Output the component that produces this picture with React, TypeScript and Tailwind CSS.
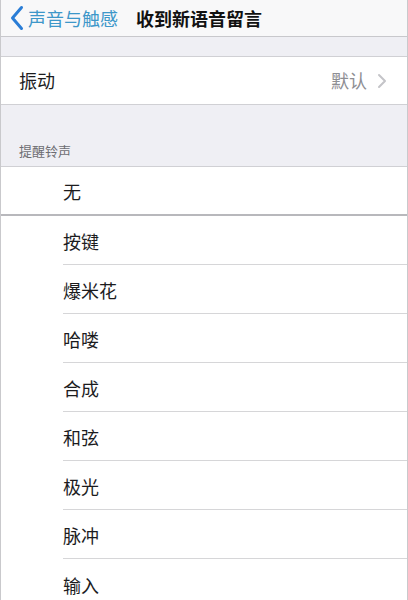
const font = "font-['Noto_Sans_CJK_SC','Noto_Sans',sans-serif]";

const tones = ['按键', '爆米花', '哈喽', '合成', '和弦', '极光', '脉冲', '输入'];

function ToneRow({ label, last }: { label: string; last?: boolean }) {
  return (
    <div className="pl-[62px] bg-white">
      <div className={`h-[49px] flex items-center pt-[3px] text-[18px] text-[#1c1c1e] ${last ? '' : 'border-b border-[#d6d6d8]'}`}>
        {label}
      </div>
    </div>
  );
}

export default function App() {
  return (
    <div className={`${font} w-[408px] h-[600px] overflow-hidden bg-[#efeff4] border-x border-[#c9c9cc] antialiased`}>
      {/* nav bar */}
      <div className="h-[37px] bg-[#f8f8f9] border-b border-[#c8c8cc] flex items-center">
        <svg width="14" height="26" viewBox="0 0 14 26" className="ml-[9px]">
          <path d="M11.5 2.5 L2.5 13 L11.5 23.5" fill="none" stroke="#2a7dd6" strokeWidth="3" strokeLinecap="round" strokeLinejoin="round" />
        </svg>
        <span className="ml-[4px] text-[18px] text-[#3d97c9] leading-none">声音与触感</span>
        <span className="ml-[18px] text-[18px] font-semibold text-[#111] leading-none">收到新语音留言</span>
      </div>

      <div className="h-[19px]" />

      <div className="bg-white border-y border-[#d0d0d4] h-[49px] flex items-center pl-[18px] pr-[20px]">
        <span className="text-[18px] text-[#1c1c1e]">振动</span>
        <span className="ml-auto text-[18px] text-[#8e8e93]">默认</span>
        <svg width="10" height="16" viewBox="0 0 10 16" className="ml-[10px]">
          <path d="M2 2 L8 8 L2 14" fill="none" stroke="#c4c4c8" strokeWidth="2" strokeLinecap="round" strokeLinejoin="round" />
        </svg>
      </div>

      <div className="h-[61px] flex items-end pl-[18px] pb-[6px]">
        <span className="text-[13px] text-[#6d6d72]">提醒铃声</span>
      </div>

      <div className="bg-white border-t border-[#d0d0d4] border-b-2 border-b-[#b8b8bc] h-[50px] flex items-center pt-[2px] pl-[62px]">
        <span className="text-[18px] text-[#1c1c1e]">无</span>
      </div>

      {tones.map((t, i) => (
        <ToneRow key={t} label={t} last={i === tones.length - 1} />
      ))}
    </div>
  );
}
